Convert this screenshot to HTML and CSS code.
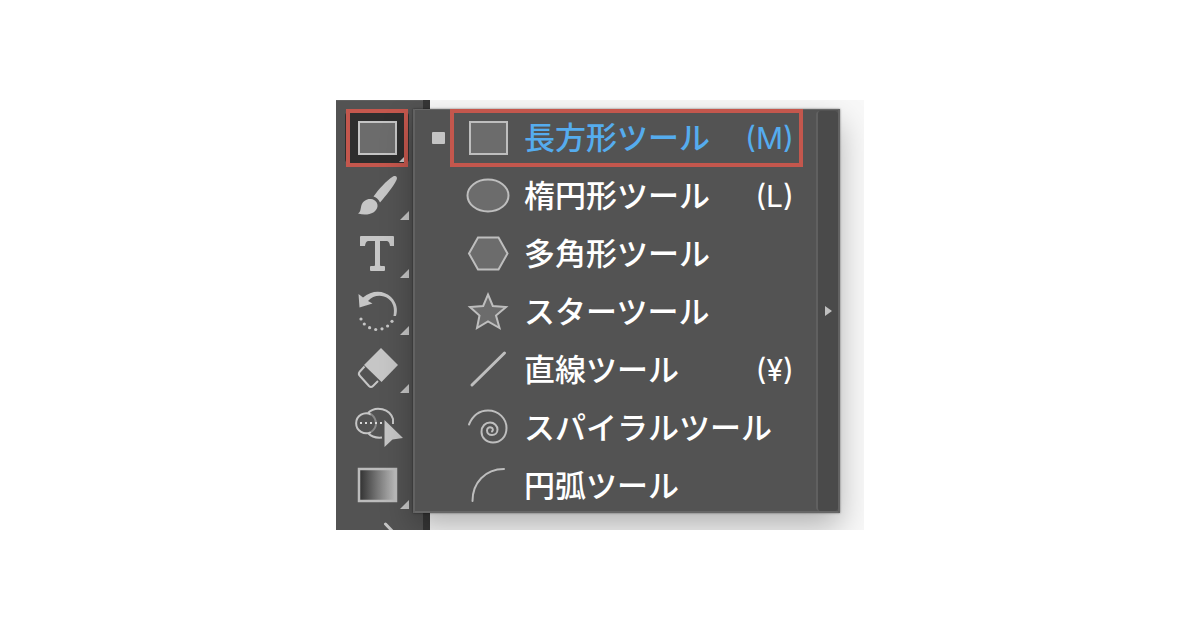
FILE: index.html
```html
<!DOCTYPE html>
<html lang="ja">
<head>
<meta charset="utf-8">
<meta name="viewport" content="width=device-width, initial-scale=1">
<title>長方形ツール</title>
<link rel="stylesheet" href="styles.css">
</head>
<body>
<main class="scene">
  <div class="toolbar" role="toolbar" aria-label="ツール">
    <button class="tool tool-active" type="button" aria-label="長方形">
      <svg class="tool-icon" viewBox="345 109 64 58"><rect x="359" y="122" width="37" height="32" fill="#6c6c6c" stroke="#c4c4c4" stroke-width="2"/><path fill="#c6c6c6" d="M408 153v9h-9z"/></svg>
    </button>
    <button class="tool" type="button" aria-label="ブラシ">
      <svg class="tool-icon" viewBox="345 167 64 58"><g fill="#c6c6c6"><path d="M373.5 196.500C379 189 386 181 393 176.500C396 175 398 177 396.500 180C393 187 386.500 195 380 202.500C378.500 199 376 197 373.500 196.500Z"/><path d="M371 199C375.500 199.500 378 203 377.500 206.500C376.500 213 367.500 216.500 358 213.500C361 212 360.500 208 361.500 205C363 201 367 198.500 371 199Z"/><path d="M409 211v9h-9z"/></g></svg>
    </button>
    <button class="tool" type="button" aria-label="文字">
      <svg class="tool-icon" viewBox="345 225 64 58"><g fill="#c6c6c6"><path d="M361 236H393Q394 236 394 237V246H390Q389.500 241.500 387 241H380V265Q380 266 381 266H384Q385 266 385 267V270Q385 271 384 271H371Q370 271 370 270V267Q370 266 371 266H374Q375 266 375 265V241H368Q365.500 241.500 365 246H360V237Q360 236 361 236Z"/><path d="M409 269v9h-9z"/></g></svg>
    </button>
    <button class="tool" type="button" aria-label="回転">
      <svg class="tool-icon" viewBox="345 283 64 58"><g fill="#c6c6c6"><path d="M358.500 294L363 297.500C372 289.500 384 290 391 297C397 303 398 310 396 316H393.500C395 308 393 302 388 298.500C382 294 373 295 368 301L372.500 303.500L359.500 307.500Z"/><circle cx="361" cy="319" r="1.600"/><circle cx="364.300" cy="324" r="1.600"/><circle cx="369.600" cy="327.700" r="1.600"/><circle cx="375.700" cy="329.500" r="1.600"/><circle cx="382" cy="328.800" r="1.600"/><circle cx="387.600" cy="326" r="1.600"/><circle cx="392" cy="321.300" r="1.600"/><path d="M409 326v9h-9z"/></g></svg>
    </button>
    <button class="tool" type="button" aria-label="消しゴム">
      <svg class="tool-icon" viewBox="345 341 64 58"><path fill="#c6c6c6" d="M381 348L398 365L381.500 382L364 365Z"/><path fill="none" stroke="#c6c6c6" stroke-width="2" stroke-linejoin="round" d="M364.500 366.500L359.500 372Q358 374 360 376L369 386Q371 388 373 386L378 381"/><path fill="#c6c6c6" d="M409 384v9h-9z"/></svg>
    </button>
    <button class="tool" type="button" aria-label="シェイプ形成">
      <svg class="tool-icon" viewBox="345 399 64 58"><g fill="none" stroke="#c6c6c6" stroke-width="2"><path d="M368 413C376 405 390 409 393 419V424M368 433Q373 438.500 382 437.500"/><path d="M371 414.500A10 10 0 1 0 371 432"/><path stroke="#888" d="M371 414Q376 418 376 424Q375.500 429 371 432"/></g><path fill="#d8d8d8" d="M360 422h2v2h-2zM365 422h2v2h-2zM370 422h2v2h-2zM375 422h2v2h-2zM380 422h2v2h-2z"/><path fill="#c6c6c6" d="M384.500 420L403 438L392.500 439.500L384.500 447Z"/></svg>
    </button>
    <button class="tool" type="button" aria-label="グラデーション">
      <svg class="tool-icon" viewBox="345 457 64 58"><defs><linearGradient id="ramp"><stop stop-color="#303030"/><stop offset="1" stop-color="#bebebe"/></linearGradient></defs><rect x="359" y="469" width="37" height="32" fill="url(#ramp)" stroke="#bcbcbc" stroke-width="2.500"/><path fill="#c6c6c6" d="M409 500v9h-9z"/></svg>
    </button>
    <button class="tool tool-cut" type="button" aria-label="スポイト">
      <svg class="tool-icon" viewBox="345 515 64 58"><path stroke="#c6c6c6" stroke-width="3" stroke-linecap="round" d="M385.500 524L396 535"/></svg>
    </button>
  </div>

  <div class="flyout">
    <div class="menu" role="menu">
      <button class="item item-active" type="button" role="menuitem">
        <span class="marker"></span>
        <svg class="icon" viewBox="466 111 44 54"><rect x="470" y="122" width="37" height="32"/></svg>
        <span class="label">長方形ツール</span><span class="key">(M)</span>
      </button>
      <button class="item" type="button" role="menuitem">
        <span class="marker"></span>
        <svg class="icon" viewBox="466 169 44 54"><ellipse cx="488" cy="195.500" rx="20.500" ry="16"/></svg>
        <span class="label">楕円形ツール</span><span class="key">(L)</span>
      </button>
      <button class="item" type="button" role="menuitem">
        <span class="marker"></span>
        <svg class="icon" viewBox="466 227 44 54"><path d="M478 237.500H498.500L507.500 253.500L498.500 269.500H478L469 253.500Z"/></svg>
        <span class="label">多角形ツール</span><span class="key"></span>
      </button>
      <button class="item" type="button" role="menuitem">
        <span class="marker"></span>
        <svg class="icon" viewBox="466 285 44 54"><path d="M488 294.500L492.800 306L506 307L496 315.500L499.500 328L488 321.500L477 328L479.500 315.500L470 307L483.200 306Z"/></svg>
        <span class="label">スターツール</span><span class="key"></span>
      </button>
      <button class="item" type="button" role="menuitem">
        <span class="marker"></span>
        <svg class="icon" viewBox="466 343 44 54"><path class="thick" d="M472 385L504.500 353"/></svg>
        <span class="label">直線ツール</span><span class="key">(¥)</span>
      </button>
      <button class="item" type="button" role="menuitem">
        <span class="marker"></span>
        <svg class="icon" viewBox="466 401 44 54"><path class="line" d="M469 424.500C473 415 480 410.500 488 410.500C499 410.500 506.500 419 506.500 428C506.500 437 500.500 442.500 493 442.500C486 442.500 481.500 437.500 481.500 432C481.500 426 485.500 422.500 490 422.500C494.500 422.500 497.500 426 497.500 429.500C497.500 433 495 435 492 435C489 435 487 433 487 430.500C487 428 489 427 491 427.500C493 428 493.500 430 492 431.500"/></svg>
        <span class="label">スパイラルツール</span><span class="key"></span>
      </button>
      <button class="item" type="button" role="menuitem">
        <span class="marker"></span>
        <svg class="icon" viewBox="466 459 44 54"><path class="line" d="M472.500 501C472.500 483 485 469 504 469"/></svg>
        <span class="label">円弧ツール</span><span class="key"></span>
      </button>
    </div>
    <button class="tearoff" type="button" aria-label="切り離し"><svg class="arrow" viewBox="0 0 7 10"><path fill="#c0c0c0" d="M0 0L7 5L0 10Z"/></svg></button>
  </div>
</main>
</body>
</html>
```
FILE: styles.css
```css
* {
  box-sizing: border-box;
}

body {
  margin: 0;
  min-height: 100vh;
  display: grid;
  place-items: center;
  background: #fff;
  font-family: "Noto Sans CJK JP", sans-serif;
}

button {
  margin: 0;
  padding: 0;
  border: 0;
  background: none;
  color: inherit;
  font: inherit;
  text-align: left;
}

.scene {
  position: relative;
  width: 100%;
  max-width: 528px;
  overflow: hidden;
  background: #f8f8f8;
}

.toolbar {
  width: 94px;
  padding: 9px 0 0 9px;
  display: flex;
  flex-direction: column;
  background: #535353;
  border-right: 7px solid #363636;
  box-shadow: inset 0 1px #606060;
}

.tool {
  position: relative;
  width: 64px;
  height: 58px;
}

.tool-icon {
  position: relative;
  display: block;
  width: 64px;
  height: 58px;
}

.tool-active::before {
  content: "";
  position: absolute;
  inset: 3px 0 4px;
  border-radius: 4px;
  background: #2e2e2e;
}

.tool-active::after {
  content: "";
  position: absolute;
  inset: 0 1px;
  border: 4px solid #c4574d;
}

.tool-cut {
  height: 15px;
  overflow: hidden;
}

.flyout {
  position: absolute;
  top: 9px;
  left: 77px;
  right: 24px;
  display: flex;
  background: #535353;
  border-right: 2px solid #626262;
  box-shadow: inset 2px 0 #626262, inset 0 -2px #666, inset 0 1px #666, 0 0 2px rgba(0, 0, 0, .5), 0 14px 30px rgba(0, 0, 0, .28);
}

.menu {
  flex: 1;
  padding: 2px 22px 0 19px;
  display: flex;
  flex-direction: column;
  gap: 4px;
}

.item {
  position: relative;
  height: 54px;
  display: flex;
  align-items: center;
  color: #fff;
  font-size: 31px;
  font-weight: 500;
  line-height: 46px;
  white-space: nowrap;
}

.item-active {
  color: #55acee;
}

.item-active::after {
  content: "";
  position: absolute;
  inset: -2px -9px -2px 18px;
  border: 4px solid #c4574d;
}

.marker {
  width: 13px;
  height: 12px;
  margin-right: 21px;
}

.item-active .marker {
  border-radius: 1px;
  background: #c4c4c4;
}

.icon {
  width: 44px;
  height: 54px;
  margin-right: 14px;
  fill: #6c6c6c;
  stroke: #bebebe;
  stroke-width: 2;
}

.icon .line,
.icon .thick {
  fill: none;
  stroke-linecap: round;
}

.icon .thick {
  stroke-width: 3;
}

.label {
  padding-bottom: 4px;
}

.key {
  margin-left: auto;
  font-family: Inter, sans-serif;
  font-size: 30px;
  font-weight: 400;
}

.tearoff {
  width: 22px;
  margin: 2px 0;
  display: grid;
  place-items: center;
  background: #4a4a4a;
  border-left: 2px solid #606060;
  border-radius: 4px;
}

.arrow {
  width: 7px;
  height: 10px;
}
```
